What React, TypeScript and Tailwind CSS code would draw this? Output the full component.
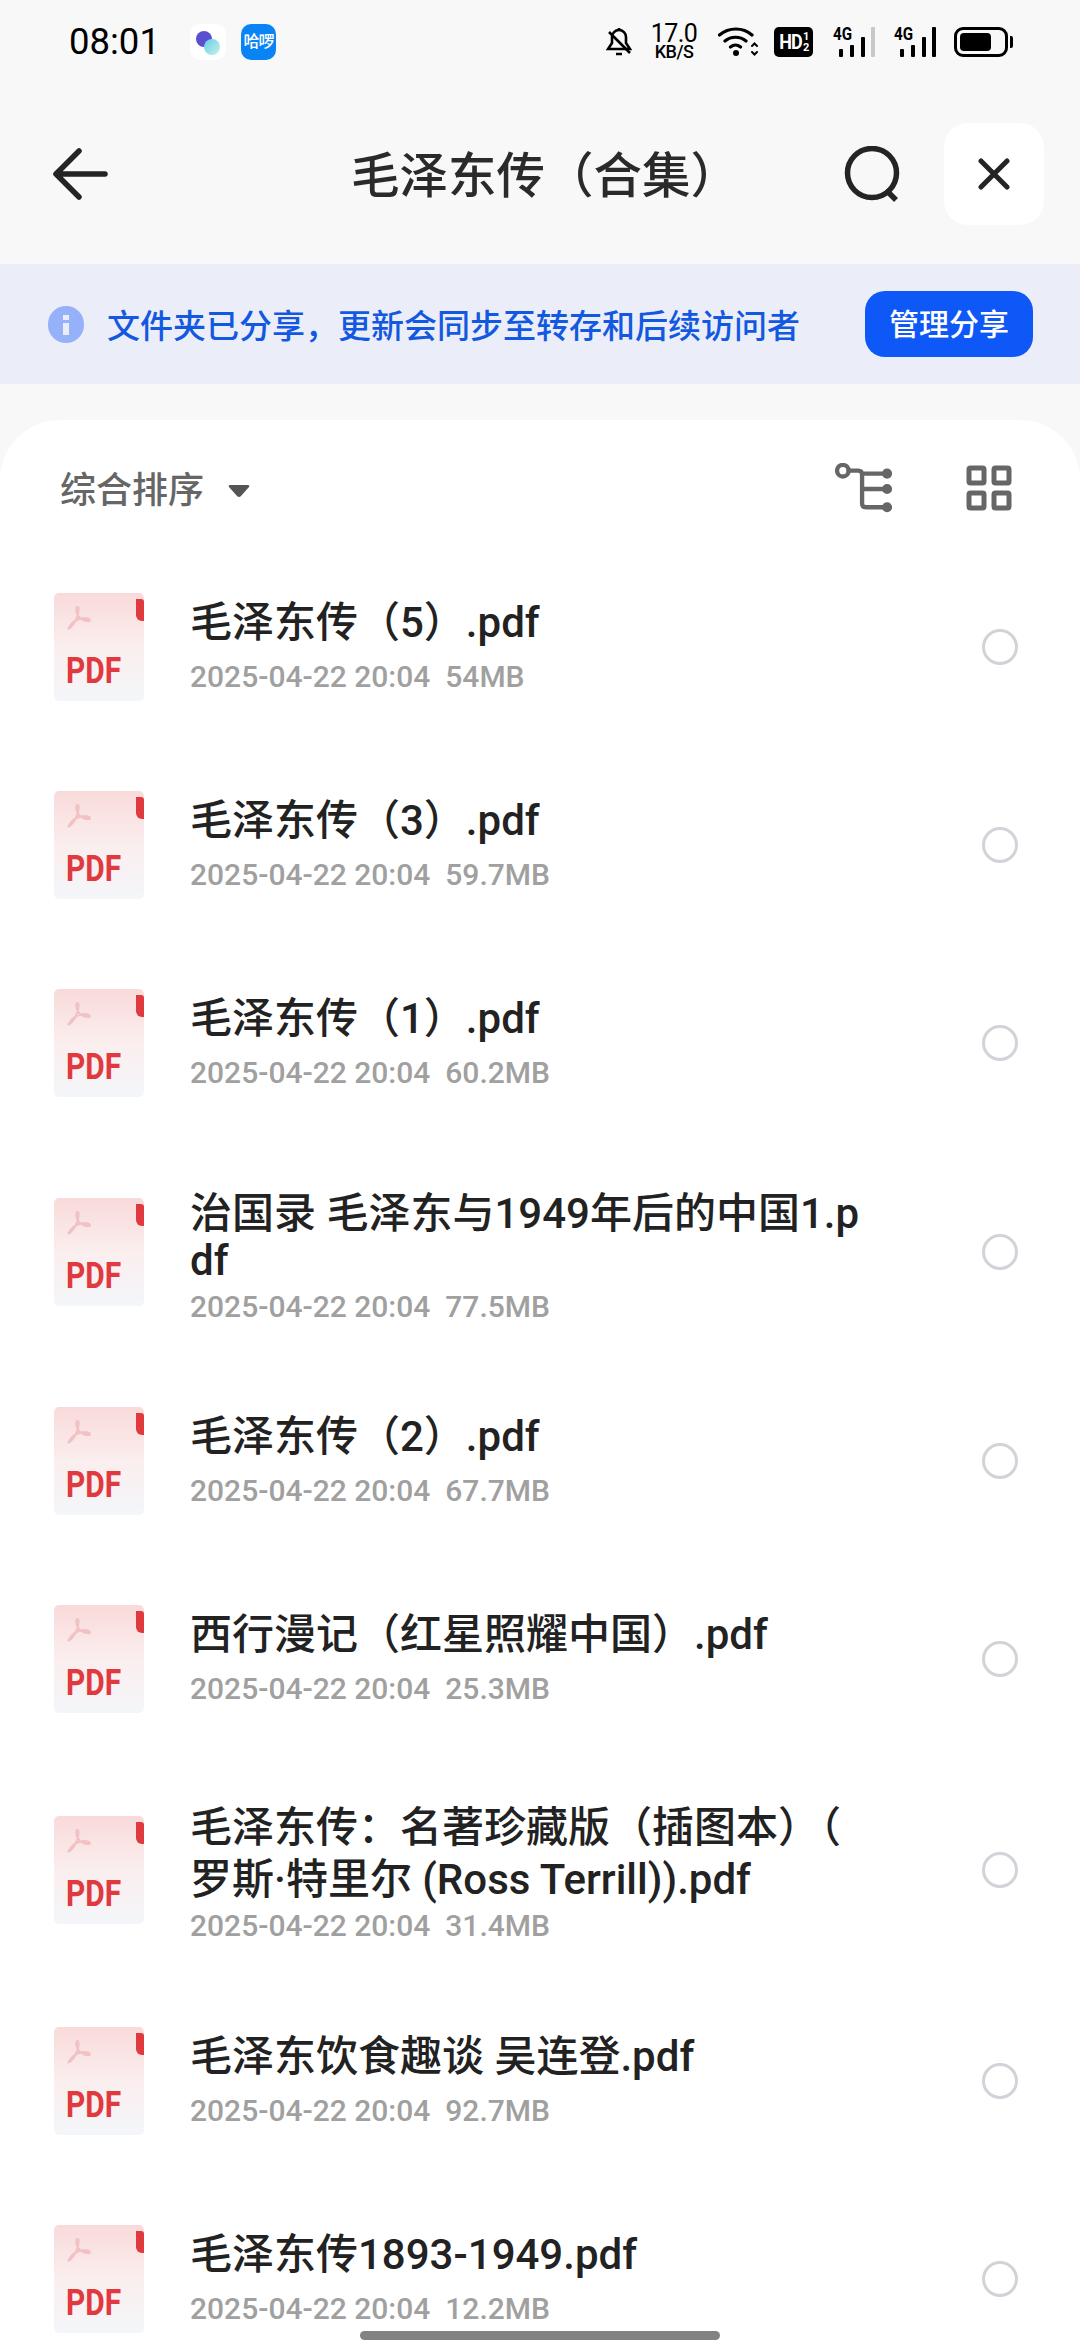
import React from "react";

const FONT = "font-['Roboto','Noto_Sans_CJK_SC',sans-serif]";

const files = [
  { name: ["毛泽东传（5）.pdf"], meta: "54MB", h: "h-[198px]" },
  { name: ["毛泽东传（3）.pdf"], meta: "59.7MB", h: "h-[198px]" },
  { name: ["毛泽东传（1）.pdf"], meta: "60.2MB", h: "h-[198px]" },
  { name: ["治国录 毛泽东与1949年后的中国1.p", "df"], meta: "77.5MB", h: "h-[220px]" },
  { name: ["毛泽东传（2）.pdf"], meta: "67.7MB", h: "h-[198px]" },
  { name: ["西行漫记（红星照耀中国）.pdf"], meta: "25.3MB", h: "h-[198px]" },
  { name: ["毛泽东传：名著珍藏版（插图本）（", "罗斯·特里尔 (Ross Terrill)).pdf"], meta: "31.4MB", h: "h-[224px]", tall: true },
  { name: ["毛泽东饮食趣谈 吴连登.pdf"], meta: "92.7MB", h: "h-[198px]" },
  { name: ["毛泽东传1893-1949.pdf"], meta: "12.2MB", h: "h-[198px]" },
];

function PdfIcon() {
  return (
    <div className="relative w-[90px] h-[108px] rounded-[5px] bg-gradient-to-b from-[#f9dada] via-[#fbeeee] to-[#f3f6fa] shrink-0">
      <div className="absolute right-0 top-[6px] w-[8px] h-[22px] bg-[#e0393e] rounded-bl-[6px] rounded-tr-[3px]" />
      <svg className="absolute left-[13px] top-[13px]" width="24" height="24" viewBox="0 0 24 24" fill="none" stroke="#f0c2c4" strokeWidth="2.200" strokeLinejoin="round">
        <path d="M10.500 1C9 1 9 4 10 7C11 11 15 15 22.500 15C24 13 19 11.500 14 12.500C9 13.500 4 17 1.500 22.500C5 21 9 15 10.500 10C11.500 6 12 1 10.500 1Z" />
      </svg>
      <span className="absolute left-[12px] top-[58px] text-[36px] leading-[40px] font-bold text-[#e0393e] font-['Roboto','Liberation_Sans',sans-serif] scale-x-[0.83] origin-left">PDF</span>
    </div>
  );
}

function FileRow({ name, meta, h, tall }: { name: string[]; meta: string; h: string; tall?: boolean }) {
  const two = name.length > 1;
  return (
    <div className={`flex items-center pl-[54px] pr-[62px] ${h}`}>
      <PdfIcon />
      <div className={`ml-[46px] flex-1 min-w-0 flex flex-col ${tall ? "pt-[6px]" : two ? "pt-[10px]" : ""}`}>
        {name.map((l) => (
          <div key={l} className={`text-[42px] ${tall ? "leading-[52px]" : "leading-[47px]"} font-medium text-[#222222] whitespace-nowrap`}>{l}</div>
        ))}
        <div className={`${tall ? "mt-[2px]" : two ? "mt-[5px]" : "mt-[13px]"} text-[30px] leading-[36px] font-medium text-[#a0a0a0] whitespace-pre`}>{`2025-04-22 20:04  ${meta}`}</div>
      </div>
      <div className="w-[36px] h-[36px] rounded-full border-[3px] border-[#d2d3d8] bg-white shrink-0" />
    </div>
  );
}

function Signal({ weak, ml }: { weak?: boolean; ml: string }) {
  return (
    <div className={`${ml} w-[42px] h-[30px] relative`}>
      <span className="absolute left-0 top-[-2px] text-[19px] leading-[18px] font-bold scale-x-[0.8] origin-left">4G</span>
      <div className="absolute left-[6px] bottom-0 w-[4px] h-[8px] bg-black rounded-[1px]" />
      <div className="absolute left-[17px] bottom-0 w-[4px] h-[12px] bg-black rounded-[1px]" />
      <div className="absolute left-[28px] bottom-0 w-[4px] h-[20px] bg-black rounded-[1px]" />
      <div className={`absolute left-[38px] bottom-0 w-[4px] h-[30px] rounded-[1px] ${weak ? "bg-[#c8c8c8]" : "bg-black"}`} />
    </div>
  );
}

function StatusBar() {
  return (
    <div className="h-[84px] flex items-center pl-[69px] pr-[67px] text-black">
      <span className="text-[36.500px] leading-[42px] font-normal">08:01</span>
      <div className="ml-[30px] w-[36px] h-[36px] rounded-[10px] bg-white relative">
        <div className="absolute left-[6px] top-[7px] w-[16px] h-[16px] rounded-full bg-[#5a4fd0]" />
        <div className="absolute left-[14px] top-[15px] w-[16px] h-[16px] rounded-full bg-gradient-to-br from-[#60cdea] to-[#c5f2e4]" />
      </div>
      <div className="ml-[15px] w-[35px] h-[36px] rounded-[10px] bg-[#0a84f5] flex items-center justify-center text-white text-[16px] leading-none font-medium tracking-[-1px]">哈啰</div>
      <div className="flex-1" />
      <svg width="26" height="30" viewBox="0 0 26 30" fill="none" stroke="black" strokeWidth="2.600">
        <path d="M2 22h22l-4-6v-6a7 7 0 0 0-14 0v6z" />
        <path d="M13 1v2M10 27h6M3 5l21 21" />
      </svg>
      <div className="ml-[21px] w-[42px] flex flex-col items-center text-center">
        <span className="text-[25px] leading-[20px] tracking-[-0.5px]">17.0</span>
        <span className="text-[18px] leading-[16px] font-medium tracking-[-0.5px]">KB/S</span>
      </div>
      <svg className="ml-[23px]" width="40" height="32" viewBox="0 0 40 32" fill="none" stroke="black" strokeWidth="3.200" strokeLinecap="round">
        <path d="M1.500 9C11 1 25 1 34 9M7 15c6-5 15-5 21 0M12.500 21c3-2.500 7-2.500 10 0" />
        <circle cx="18" cy="27" r="3" fill="black" stroke="none" />
        <path d="M34 20l2.500-2.500 2.500 2.500M34 26l2.500 2.500 2.500-2.500" strokeWidth="2" />
      </svg>
      <div className="ml-[16px] w-[39px] h-[30px] bg-black rounded-[5px] text-white flex items-center justify-center">
        <span className="text-[20px] leading-[30px] font-bold tracking-[-1px] scale-x-90">HD</span>
        <span className="flex flex-col text-[11px] leading-[11px] font-bold"><span>1</span><span>2</span></span>
      </div>
      <Signal weak ml="ml-[20px]" />
      <Signal ml="ml-[19px]" />
      <div className="ml-[18px] w-[54px] h-[30px] rounded-[9px] border-[3px] border-black p-[3px]">
        <div className="w-[31px] h-full bg-black rounded-[4px]" />
      </div>
      <div className="ml-[2px] w-[3px] h-[12px] bg-black rounded-r-[2px]" />
    </div>
  );
}

export default function App() {
  return (
    <div className={`w-[1080px] h-[2340px] relative overflow-hidden bg-[#f8f8f9] ${FONT}`}>
      <StatusBar />
      <div className="h-[180px] flex items-center pl-[53px] pr-[36px]">
        <svg width="56" height="52" viewBox="0 0 56 52" fill="none" stroke="#242424" strokeWidth="5.500" strokeLinecap="round" strokeLinejoin="round">
          <path d="M52 26H3M26 3L3 26l23 23" />
        </svg>
        <div className="flex-1 text-center text-[48.500px] leading-[56px] text-[#2a2a2a] pl-[137px] pt-[6px] font-medium">毛泽东传（合集）</div>
        <svg className="mr-[42px]" width="58" height="56" viewBox="0 0 58 56" fill="none" stroke="#242424" strokeWidth="5.500">
          <circle cx="28" cy="27" r="24.500" />
          <path d="M42 44l10 10" />
        </svg>
        <div className="w-[100px] h-[102px] rounded-[24px] bg-white flex items-center justify-center">
          <svg width="32" height="32" viewBox="0 0 32 32" fill="none" stroke="#242424" strokeWidth="5" strokeLinecap="round">
            <path d="M3 3l26 26M29 3L3 29" />
          </svg>
        </div>
      </div>
      <div className="h-[120px] bg-[#ebeef8] flex items-center pl-[48px] pr-[47px]">
        <div className="w-[36px] h-[37px] rounded-full bg-[#94b1f9] relative shrink-0">
          <div className="absolute left-[15px] top-[9px] w-[6px] h-[5px] bg-[#ebeef8]" />
          <div className="absolute left-[15px] top-[17px] w-[6px] h-[12px] bg-[#ebeef8]" />
        </div>
        <div className="ml-[23px] flex-1 text-[33px] leading-[40px] pt-[5px] font-medium text-[#1358e0] whitespace-nowrap">文件夹已分享，更新会同步至转存和后续访问者</div>
        <div className="w-[168px] h-[66px] rounded-[20px] bg-[#0f58f8] text-white text-[30px] font-medium flex items-center justify-center">管理分享</div>
      </div>
      <div className="mt-[36px] bg-white rounded-t-[60px] h-[1920px]">
        <div className="h-[128px] flex items-center pl-[60px] pr-[68px] pt-[14px]">
          <span className="text-[36px] leading-[40px] font-medium text-[#666666]">综合排序</span>
          <svg className="ml-[24px]" width="22" height="14" viewBox="0 0 22 14" fill="#555555"><path d="M2 1h18q2 0 1 2l-8 9q-2 2-4 0L1 3Q0 1 2 1z" /></svg>
          <div className="flex-1" />
          <svg className="mb-[6px]" width="58" height="50" viewBox="0 0 60 52" fill="none" stroke="#666666" strokeWidth="4.500" strokeLinecap="round">
            <circle cx="8" cy="8" r="6" />
            <path d="M14 8h10q4 0 4 4v30q0 4 4 4h18M28 11h24M28 27h24" />
            <circle cx="54" cy="11" r="3" fill="#666666" />
            <circle cx="54" cy="27" r="3" fill="#666666" />
            <circle cx="54" cy="46" r="3" fill="#666666" />
          </svg>
          <svg className="ml-[73px] mb-[6px]" width="46" height="46" viewBox="0 0 46 46" fill="none" stroke="#666666" strokeWidth="5">
            <rect x="3" y="3" width="15" height="15" rx="1.500" />
            <rect x="28" y="3" width="15" height="15" rx="1.500" />
            <rect x="3" y="28" width="15" height="15" rx="1.500" />
            <rect x="28" y="28" width="15" height="15" rx="1.500" />
          </svg>
        </div>
        {files.map((f) => (
          <FileRow key={f.name[0]} name={f.name} meta={f.meta} h={f.h} tall={f.tall} />
        ))}
      </div>
      <div className="absolute left-[360px] bottom-0 w-[360px] h-[9px] rounded-full bg-[#828282]" />
    </div>
  );
}
